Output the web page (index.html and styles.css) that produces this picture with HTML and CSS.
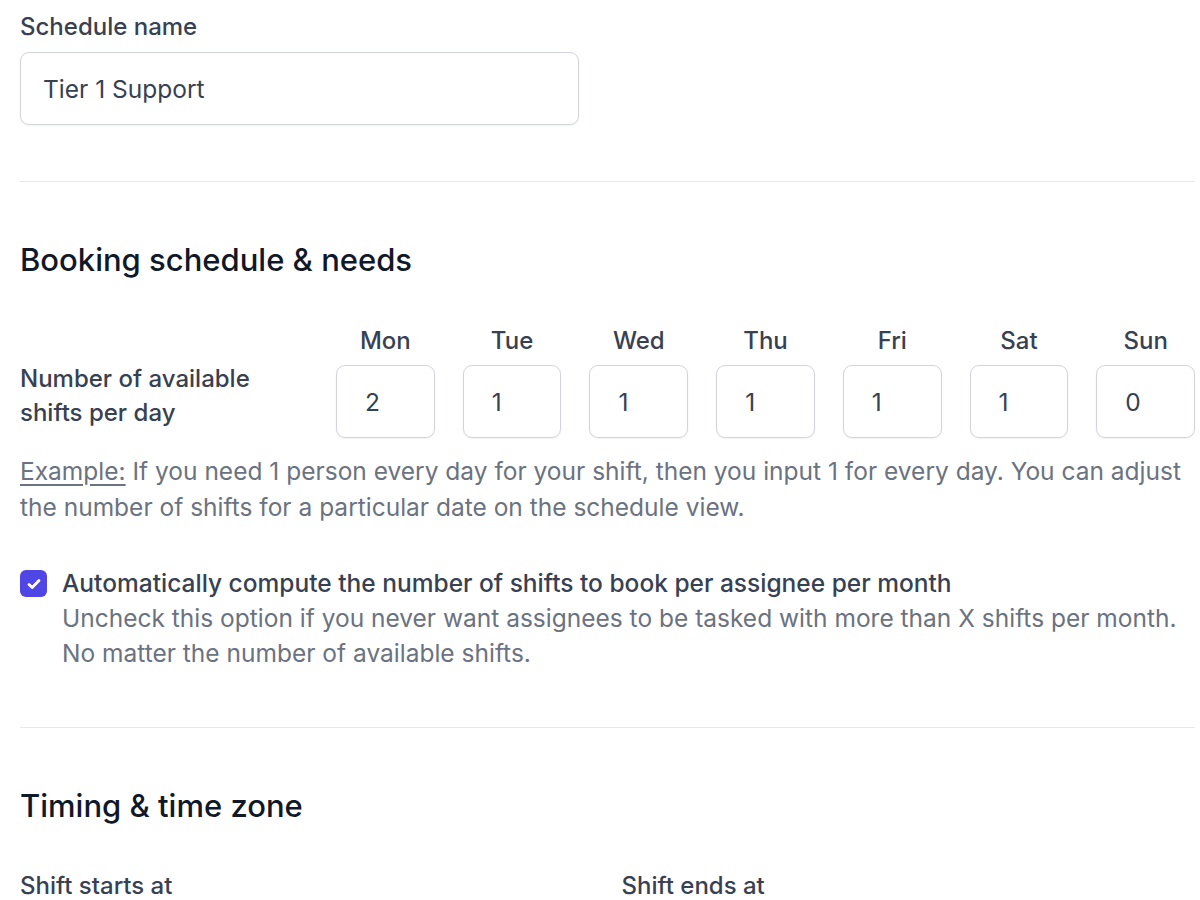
FILE: index.html
```html
<!DOCTYPE html>
<html>
<head>
    <link rel="stylesheet" href="styles.css">
</head>
<body>
    <div class="form">
        <div class="field">
            <label class="label" for="scheduleName">Schedule name</label>
            <input class="text-input" id="scheduleName" type="text" value="Tier 1 Support">
        </div>

        <hr class="divider">

        <h2 class="section-title">Booking schedule &amp; needs</h2>

        <div class="days">
            <div class="days-label">Number of available shifts per day</div>
            <div class="day"><div class="day-name">Mon</div><input class="day-input" type="text" value="2"></div>
            <div class="day"><div class="day-name">Tue</div><input class="day-input" type="text" value="1"></div>
            <div class="day"><div class="day-name">Wed</div><input class="day-input" type="text" value="1"></div>
            <div class="day"><div class="day-name">Thu</div><input class="day-input" type="text" value="1"></div>
            <div class="day"><div class="day-name">Fri</div><input class="day-input" type="text" value="1"></div>
            <div class="day"><div class="day-name">Sat</div><input class="day-input" type="text" value="1"></div>
            <div class="day"><div class="day-name">Sun</div><input class="day-input" type="text" value="0"></div>
        </div>

        <p class="help"><span class="help-link">Example:</span> If you need 1 person every day for your shift, then you input 1 for every day. You can adjust the number of shifts for a particular date on the schedule view.</p>

        <div class="check-row">
            <span class="checkbox">
                <svg width="18" height="18" viewBox="0 0 18 18" fill="none">
                    <path d="M4 9.4l3.2 3.1 6.8-7" stroke="#fff" stroke-width="2.8" stroke-linecap="round" stroke-linejoin="round"/>
                </svg>
            </span>
            <div class="check-text">
                <div class="check-title">Automatically compute the number of shifts to book per assignee per month</div>
                <div class="check-desc">Uncheck this option if you never want assignees to be tasked with more than X shifts per month. No matter the number of available shifts.</div>
            </div>
        </div>

        <hr class="divider">

        <h2 class="section-title">Timing &amp; time zone</h2>

        <div class="two-cols">
            <div class="label">Shift starts at</div>
            <div class="label">Shift ends at</div>
        </div>
    </div>
</body>
</html>
```

FILE: styles.css
```css
body {
    margin: 0;
    background: #fff;
    font-family: Inter, "Noto Sans", sans-serif;
    color: #374151;
    overflow: hidden;
}

.form {
    width: 1175px;
    padding: 12px 0 0 20px;
}

.label {
    display: block;
    font-size: 24px;
    line-height: 30px;
    font-weight: 500;
    color: #374151;
}

.text-input {
    display: block;
    box-sizing: border-box;
    width: 559px;
    height: 73px;
    margin-top: 10px;
    padding: 0 22px;
    border: 1px solid #d1d5db;
    border-radius: 9px;
    box-shadow: 0 1px 2px rgba(0,0,0,0.05);
    font-family: inherit;
    font-size: 24.5px;
    color: #374151;
    outline: none;
}

.divider {
    border: none;
    border-top: 1px solid #e5e7eb;
    margin: 56px 0 0 0;
}

.section-title {
    margin: 57px 0 0 0;
    font-size: 31px;
    line-height: 42px;
    font-weight: 500;
    color: #111827;
}

.days {
    display: grid;
    grid-template-columns: 288px repeat(7, 1fr);
    column-gap: 28px;
    margin-top: 45px;
}

.days-label {
    align-self: end;
    padding-bottom: 8px;
    font-size: 24px;
    line-height: 34px;
    font-weight: 500;
}

.day {
    display: flex;
    flex-direction: column;
    align-items: center;
}

.day-name {
    font-size: 24px;
    line-height: 30px;
    font-weight: 500;
    margin-bottom: 9px;
}

.day-input {
    box-sizing: border-box;
    width: 100%;
    height: 73px;
    padding: 0 28px;
    border: 1px solid #d1d5db;
    border-radius: 9px;
    box-shadow: 0 1px 2px rgba(0,0,0,0.05);
    font-family: inherit;
    font-size: 24.5px;
    color: #374151;
    outline: none;
}

.help {
    margin: 15px 0 0 0;
    font-size: 24.5px;
    line-height: 36px;
    color: #6b7280;
}

.help-link {
    text-decoration: underline;
    text-underline-offset: 4px;
}

.check-row {
    display: flex;
    gap: 15px;
    margin-top: 41px;
}

.checkbox {
    flex: none;
    display: flex;
    align-items: center;
    justify-content: center;
    width: 27px;
    height: 27px;
    margin-top: 4px;
    border-radius: 6px;
    background: #4f46e5;
}

.check-title {
    font-size: 24.5px;
    line-height: 35px;
    font-weight: 500;
    color: #374151;
}

.check-desc {
    font-size: 24.5px;
    line-height: 35px;
    color: #6b7280;
}

.two-cols {
    display: grid;
    grid-template-columns: 1fr 1fr;
    column-gap: 28px;
    margin-top: 44px;
}
```
